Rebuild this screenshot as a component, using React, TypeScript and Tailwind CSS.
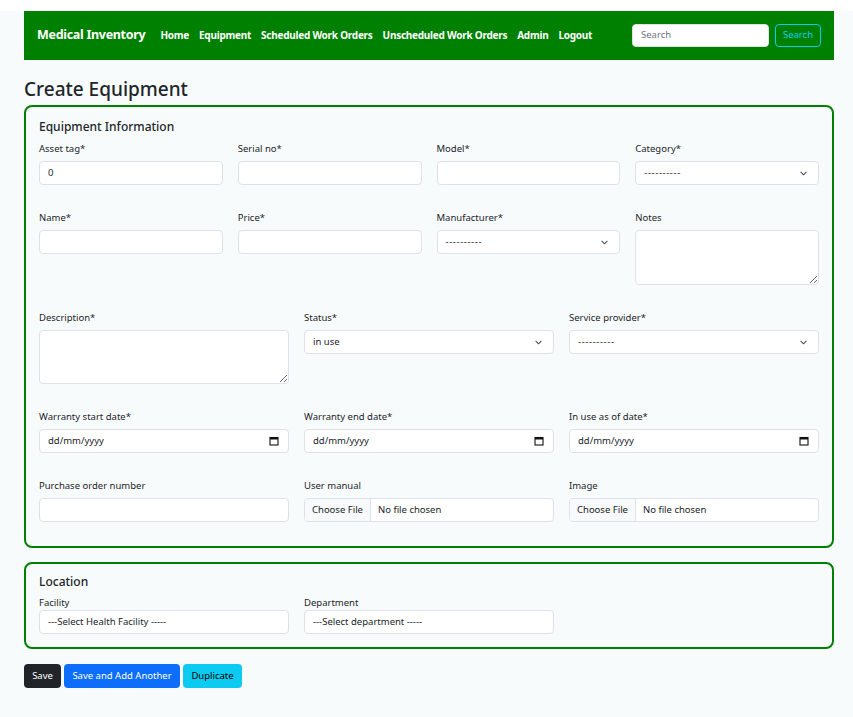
import React from 'react';

const font = { fontFamily: '"Noto Sans", "Open Sans", Arial, sans-serif' };

const navLinks = ['Home', 'Equipment', 'Scheduled Work Orders', 'Unscheduled Work Orders', 'Admin', 'Logout'];

function Chevron() {
  return (
    <svg width="7" height="7" viewBox="0 0 16 16" className="shrink-0">
      <path d="M2 5l6 6 6-6" fill="none" stroke="#495057" strokeWidth="2.4" strokeLinecap="round" strokeLinejoin="round" />
    </svg>
  );
}

function Calendar() {
  return (
    <svg width="10" height="10" viewBox="0 0 10 10" className="shrink-0">
      <rect x="1" y="1.5" width="8" height="7.5" fill="none" stroke="#111" strokeWidth="1.1" />
      <rect x="1" y="1.5" width="8" height="2" fill="#111" />
    </svg>
  );
}

function Label({ children }: { children: React.ReactNode }) {
  return <div className="text-[9.5px] leading-[15px] mb-[5px] text-[#212529]">{children}</div>;
}

function TextInput({ value }: { value?: string }) {
  return (
    <div className="h-[24px] rounded-[4px] border border-[#dee2e6] bg-white px-[8px] flex items-center text-[9.5px] text-[#212529]">
      {value}
    </div>
  );
}

function Select({ value }: { value: string }) {
  return (
    <div className="h-[24px] rounded-[4px] border border-[#dee2e6] bg-white pl-[8px] pr-[11px] flex items-center justify-between text-[9.5px] text-[#212529]">
      <span className={value.startsWith('-') ? 'tracking-[0.6px]' : ''}>{value}</span>
      <Chevron />
    </div>
  );
}

function DateInput() {
  return (
    <div className="h-[24px] rounded-[4px] border border-[#dee2e6] bg-white pl-[8px] pr-[9px] flex items-center justify-between text-[9.5px] text-[#212529]">
      <span>dd/mm/yyyy</span>
      <Calendar />
    </div>
  );
}

function FileInput() {
  return (
    <div className="h-[24px] rounded-[4px] border border-[#dee2e6] bg-white flex items-stretch text-[9.5px] text-[#212529] overflow-hidden">
      <div className="bg-[#f8f9fa] border-r border-[#dee2e6] px-[7px] flex items-center">Choose File</div>
      <div className="px-[7px] flex items-center">No file chosen</div>
    </div>
  );
}

function TextArea({ h }: { h: string }) {
  return (
    <textarea
      readOnly
      className={`${h} w-full block rounded-[4px] border border-[#dee2e6] bg-white resize-y outline-none`}
    />
  );
}

function Field({ label, children }: { label: string; children: React.ReactNode }) {
  return (
    <div>
      <Label>{label}</Label>
      {children}
    </div>
  );
}

export default function App() {
  return (
    <div className="min-h-[717px] bg-[#f8fbfc] text-[#212529]" style={font}>
      <div className="h-[11px] bg-white" />
      <div className="pl-[24px] pr-[19px]">
        <nav className="h-[49px] bg-[#008000] flex items-center pl-[13px] pr-[13px]">
          <span className="text-white font-bold text-[12.5px] mr-[15px] tracking-[-0.3px]">Medical Inventory</span>
          <div className="flex items-center gap-[10px]">
            {navLinks.map((l) => (
              <span key={l} className="text-white font-bold text-[10px] tracking-[-0.25px]">{l}</span>
            ))}
          </div>
          <div className="ml-auto flex items-center gap-[6px]">
            <div className="w-[137px] h-[23px] bg-white rounded-[4px] border border-[#dee2e6] px-[8px] flex items-center text-[9.5px] text-[#6c757d]">Search</div>
            <div className="h-[23px] w-[46px] justify-center rounded-[4px] border border-[#0dcaf0] flex items-center text-[9.5px] text-[#0dcaf0]">Search</div>
          </div>
        </nav>

        <h1 className="text-[19px] font-medium leading-[24px] mt-[17px] mb-[4px]">Create Equipment</h1>

        <div className="border-2 border-[#008000] rounded-[8px] px-[13px] pt-[11px] pb-[24px]">
          <div className="text-[12px] font-medium leading-[18px] mb-[5px]">Equipment Information</div>
          <div className="flex flex-col gap-[25px]">
            <div className="grid grid-cols-4 gap-x-[15px] items-start">
              <Field label="Asset tag*"><TextInput value="0" /></Field>
              <Field label="Serial no*"><TextInput /></Field>
              <Field label="Model*"><TextInput /></Field>
              <Field label="Category*"><Select value="----------" /></Field>
            </div>
            <div className="grid grid-cols-4 gap-x-[15px] items-start">
              <Field label="Name*"><TextInput /></Field>
              <Field label="Price*"><TextInput /></Field>
              <Field label="Manufacturer*"><Select value="----------" /></Field>
              <Field label="Notes"><TextArea h="h-[55px]" /></Field>
            </div>
            <div className="grid grid-cols-3 gap-x-[15px] items-start">
              <Field label="Description*"><TextArea h="h-[54px]" /></Field>
              <Field label="Status*"><Select value="in use" /></Field>
              <Field label="Service provider*"><Select value="----------" /></Field>
            </div>
            <div className="grid grid-cols-3 gap-x-[15px] items-start">
              <Field label="Warranty start date*"><DateInput /></Field>
              <Field label="Warranty end date*"><DateInput /></Field>
              <Field label="In use as of date*"><DateInput /></Field>
            </div>
            <div className="grid grid-cols-3 gap-x-[15px] items-start">
              <Field label="Purchase order number"><TextInput /></Field>
              <Field label="User manual"><FileInput /></Field>
              <Field label="Image"><FileInput /></Field>
            </div>
          </div>
        </div>

        <div className="mt-[14px] border-2 border-[#008000] rounded-[8px] px-[13px] pt-[9px] pb-[13px]">
          <div className="text-[12px] font-medium leading-[18px] mb-[4px]">Location</div>
          <div className="grid grid-cols-3 gap-x-[15px]">
            <div>
              <div className="text-[9.5px] leading-[15px]">Facility</div>
              <TextInput value="---Select Health Facility -----" />
            </div>
            <div>
              <div className="text-[9.5px] leading-[15px]">Department</div>
              <TextInput value="---Select department -----" />
            </div>
          </div>
        </div>

        <div className="mt-[15px] flex gap-[3px]">
          <button className="h-[24px] w-[37px] rounded-[4px] bg-[#212529] text-white text-[9.5px]">Save</button>
          <button className="h-[24px] w-[116px] rounded-[4px] bg-[#0d6efd] text-white text-[9.5px]">Save and Add Another</button>
          <button className="h-[24px] w-[59px] rounded-[4px] bg-[#0dcaf0] text-black text-[9.5px]">Duplicate</button>
        </div>
      </div>
    </div>
  );
}
